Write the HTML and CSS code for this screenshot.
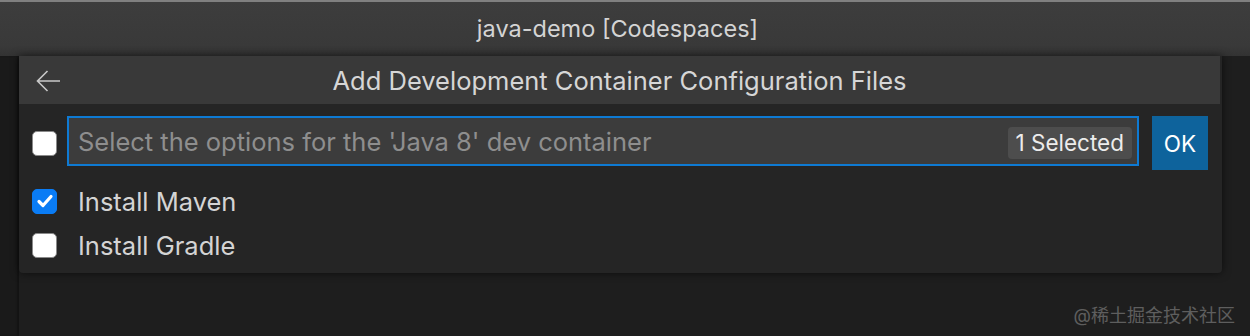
FILE: index.html
```html
<!DOCTYPE html>
<html>
<head>
<meta charset="utf-8">
<link rel="stylesheet" href="styles.css">
</head>
<body>
<div class="titlebar">java-demo [Codespaces]</div>
<div class="workspace">
  <div class="leftstrip"></div>
  <div class="dialog">
    <div class="dialog-header">
      <svg class="back" width="26" height="24" viewBox="0 0 26 24"><path d="M25 12H2.5M12.5 2L2.5 12l10 10" fill="none" stroke="#c8c8c8" stroke-width="1.6"/></svg>
      <div class="dialog-title">Add Development Container Configuration Files</div>
    </div>
    <div class="dialog-body">
      <div class="input-row">
        <span class="cb"></span>
        <div class="input">
          <span class="placeholder">Select the options for the 'Java 8' dev container</span>
          <span class="badge">1 Selected</span>
        </div>
        <div class="ok">OK</div>
      </div>
      <div class="item"><span class="cb checked"><svg width="18" height="16" viewBox="0 0 18 16"><path d="M3 8.5l4 4 8-9" fill="none" stroke="#fff" stroke-width="3.2" stroke-linecap="round" stroke-linejoin="round"/></svg></span><span class="label">Install Maven</span></div>
      <div class="item"><span class="cb"></span><span class="label">Install Gradle</span></div>
    </div>
  </div>
</div>
<div class="watermark">@稀土掘金技术社区</div>
</body>
</html>
```
FILE: styles.css
```css
* { box-sizing: border-box; }
html, body { margin: 0; padding: 0; }
body {
  width: 1250px;
  height: 336px;
  background: #1e1e1e;
  font-family: Inter, "Noto Sans", sans-serif;
  overflow: hidden;
  position: relative;
}
.titlebar {
  height: 56px;
  background: linear-gradient(#3d3d3d, #393939 80%, #333333);
  border-top: 2px solid #808080;
  color: #d4d4d4;
  font-size: 23.5px;
  display: flex;
  align-items: center;
  justify-content: center;
  padding: 0 15px 2px 0;
}
.workspace {
  display: flex;
  align-items: flex-start;
}
.leftstrip {
  width: 19px;
  height: 280px;
  background: #1a1a1a;
  box-shadow: inset -2px 0 2px #141414;
}
.dialog {
  width: 1203px;
  height: 217px;
  background: #252525;
  border-radius: 0 0 4px 4px;
  box-shadow: 0 0 8px rgba(0,0,0,0.6);
}
.dialog-header {
  height: 48px;
  width: 1201px;
  background: #393939;
  display: flex;
  align-items: center;
  position: relative;
}
.back {
  margin-left: 16px;
  margin-top: 2px;
}
.dialog-title {
  position: absolute;
  left: 0; right: 0;
  text-align: center;
  color: #d6d6d6;
  font-size: 25.5px;
  top: 9px;
}
.dialog-body {
  padding: 12px 14px 0 13px;
}
.input-row {
  display: flex;
  align-items: flex-start;
}
.cb {
  width: 25px;
  height: 25px;
  background: #ffffff;
  border: 1px solid #8a8a8a;
  border-radius: 5px;
  flex: none;
  display: flex;
  align-items: center;
  justify-content: center;
}
.cb.checked {
  background: #0a7cf5;
  border-color: #0a7cf5;
}
.input-row .cb {
  margin-top: 15px;
}
.input {
  margin-left: 10px;
  width: 1072px;
  height: 50px;
  border: 2px solid #0e7ad3;
  background: #3c3c3c;
  display: flex;
  align-items: center;
  justify-content: space-between;
  padding: 0 5px 0 9px;
}
.placeholder {
  color: #8e8e8e;
  font-size: 25.5px;
}
.badge {
  background: #4d4d4d;
  color: #ececec;
  font-size: 22.5px;
  border-radius: 4px;
  padding: 2px 8px 3px 8px;
  margin-top: 3px;
}
.ok {
  margin-left: 13px;
  width: 56px;
  height: 54px;
  background: #0e639c;
  color: #ffffff;
  font-size: 22.5px;
  display: flex;
  align-items: center;
  justify-content: center;
}
.item {
  display: flex;
  align-items: center;
  height: 44px;
}
.input-row + .item { margin-top: 9px; }
.item .label {
  margin-left: 21px;
  color: #d4d4d4;
  font-size: 25.5px;
}
.watermark {
  position: absolute;
  right: 15px;
  top: 301px;
  color: #5e5e5e;
  font-size: 18px;
  font-family: Inter, "Noto Sans CJK SC", sans-serif;
}
```
